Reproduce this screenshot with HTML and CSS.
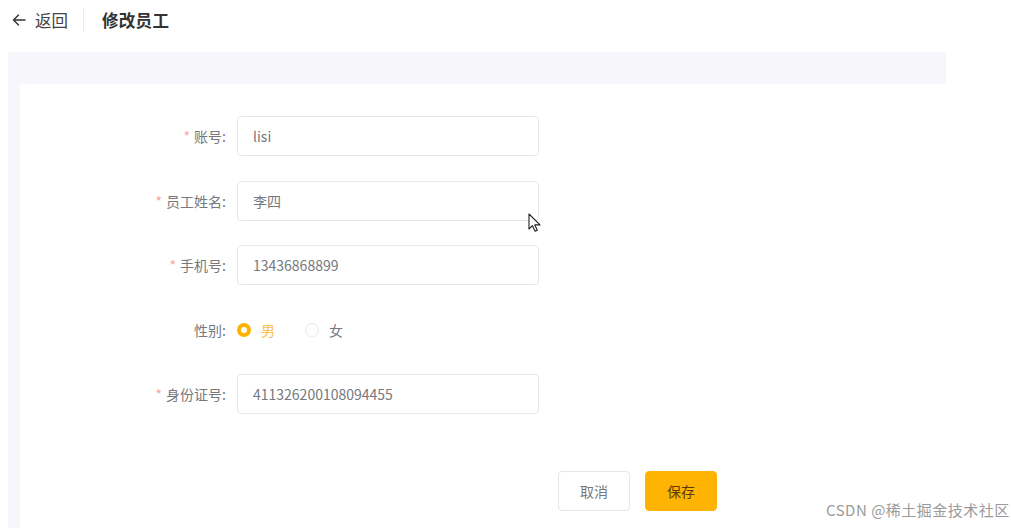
FILE: index.html
```html
<!DOCTYPE html>
<html lang="zh-CN">
<head>
<meta charset="utf-8">
<title>修改员工</title>
<link rel="stylesheet" href="styles.css">
</head>
<body>
<header class="topbar">
  <a class="back">
    <svg class="back-icon" width="14" height="14" viewBox="0 0 14 14"><path d="M13 7H1.5M6.5 2 1.5 7l5 5" fill="none" stroke="#333" stroke-width="1.4" stroke-linecap="round" stroke-linejoin="round"/></svg>
    <span>返回</span>
  </a>
  <span class="divider"></span>
  <h1 class="title">修改员工</h1>
</header>
<main class="page">
  <section class="card">
    <form class="form">
      <div class="row">
        <label class="label"><span class="req">*</span>账号:</label>
        <div class="input">lisi</div>
      </div>
      <div class="row">
        <label class="label"><span class="req">*</span>员工姓名:</label>
        <div class="input">李四</div>
      </div>
      <div class="row">
        <label class="label"><span class="req">*</span>手机号:</label>
        <div class="input">13436868899</div>
      </div>
      <div class="row">
        <label class="label">性别:</label>
        <div class="radios">
          <span class="radio checked"><span class="dot"></span>男</span>
          <span class="radio"><span class="dot"></span>女</span>
        </div>
      </div>
      <div class="row">
        <label class="label"><span class="req">*</span>身份证号:</label>
        <div class="input">411326200108094455</div>
      </div>
      <div class="actions">
        <button type="button" class="btn">取消</button>
        <button type="button" class="btn primary">保存</button>
      </div>
    </form>
  </section>
</main>
<svg class="cursor" width="14" height="20" viewBox="0 0 14 20"><path d="M1 1v15l3.5-3.3 2.6 5.6 2.2-1-2.5-5.4H12z" fill="#fff" stroke="#222" stroke-width="1.1" stroke-linejoin="round"/></svg>
<div class="watermark">CSDN @稀土掘金技术社区</div>
</body>
</html>
```
FILE: styles.css
```css
* { box-sizing: border-box; }
html, body { margin: 0; padding: 0; }
body {
  width: 1011px;
  height: 528px;
  overflow: hidden;
  background: #fff;
  font-family: "Noto Sans CJK SC", "Noto Sans", "Liberation Sans", sans-serif;
  color: #6b6d72;
  position: relative;
}
.topbar {
  height: 52px;
  display: flex;
  align-items: flex-start;
  padding: 10px 0 0 12px;
}
.back {
  display: flex;
  align-items: center;
  gap: 9px;
  height: 20px;
  font-size: 16.5px;
  color: #444;
  line-height: 20px;
}
.back-icon { display: block; }
.divider {
  width: 1px;
  height: 24px;
  margin: -2px 18px 0 15px;
  background: #ececec;
}
.title {
  margin: 0;
  font-size: 16.5px;
  line-height: 20px;
  font-weight: 700;
  color: #333;
  letter-spacing: 0.3px;
}
.page {
  margin-left: 8px;
  width: 938px;
  height: 476px;
  background: #f6f6fb;
  padding: 32px 0 0 12px;
}
.card {
  width: 991px;
  height: 444px;
  background: #fff;
  padding-top: 32px;
}
.form { margin-left: 106px; }
.row {
  display: flex;
  align-items: center;
  height: 40px;
  margin-bottom: 24.5px;
}
.label {
  width: 111px;
  padding-right: 11px;
  text-align: right;
  font-size: 14px;
  color: #76787d;
}
.req { color: #f7a3a3; margin-right: 4px; }
.input {
  width: 302px;
  height: 40px;
  border: 1px solid #e6e8ed;
  border-radius: 4px;
  padding: 0 15px;
  line-height: 38px;
  font-size: 14px;
  color: #76787d;
}
.radios { display: flex; align-items: center; gap: 30px; }
.radio {
  display: flex;
  align-items: center;
  gap: 10px;
  font-size: 14px;
  color: #76787d;
}
.radio .dot {
  width: 14px;
  height: 14px;
  border-radius: 50%;
  border: 1px solid #e6e8ee;
  background: #fff;
}
.radio.checked { color: #f5c04a; }
.radio.checked .dot {
  border: 4px solid #ffb300;
  background: #fff;
}
.actions {
  display: flex;
  gap: 15px;
  margin-top: 57px;
  margin-left: 432px;
}
.btn {
  width: 72px;
  height: 40px;
  border-radius: 4px;
  border: 1px solid #e4e6ec;
  background: #fff;
  font-family: inherit;
  font-size: 14px;
  color: #76787d;
  padding: 0;
}
.btn.primary {
  background: #ffb302;
  border-color: #ffb302;
  color: #5a3a00;
}
.cursor {
  position: absolute;
  left: 528px;
  top: 213px;
}
.watermark {
  position: absolute;
  left: 826px;
  top: 499px;
  font-size: 15px;
  color: #9a9a9a;
  white-space: nowrap;
  letter-spacing: 0.5px;
}
```
